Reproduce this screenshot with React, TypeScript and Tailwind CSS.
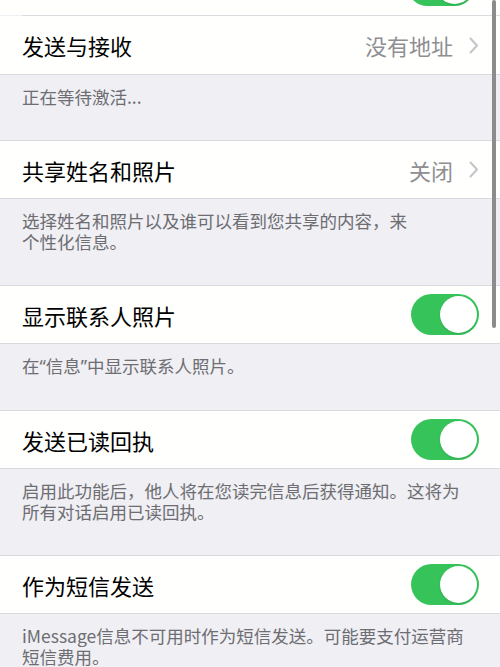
import React from 'react'

const FONT = '"Noto Sans CJK SC", "Noto Sans", sans-serif'

function Toggle() {
  return (
    <div className="relative h-[41px] w-[68px] shrink-0 rounded-full bg-[#36c45a]">
      <div className="absolute right-[2px] top-[2px] h-[37px] w-[37px] rounded-full bg-white shadow-[0_1px_2px_rgba(0,0,0,0.15)]" />
    </div>
  )
}

function Chevron() {
  return (
    <svg width="10" height="17" viewBox="0 0 10 17" className="ml-[16px] shrink-0">
      <path d="M1.5 1.5 L8 8.5 L1.5 15.5" fill="none" stroke="#c4c4c9" strokeWidth="2" strokeLinecap="round" strokeLinejoin="round" />
    </svg>
  )
}

type RowProps = { title: string; value?: string; toggle?: boolean }

function Row({ title, value, toggle }: RowProps) {
  return (
    <div className="flex h-[59px] items-center border-y border-[#d9d9de] bg-[#fffffd] pl-[22px] pr-[21px]">
      <span className="flex-1 text-[22px] leading-none text-black">{title}</span>
      {value && <span className="text-[22px] leading-none text-[#8e8e93]">{value}</span>}
      {value && <Chevron />}
      {toggle && <Toggle />}
    </div>
  )
}

function Footer({ children }: { children: React.ReactNode }) {
  return (
    <div className="whitespace-nowrap pl-[22px] pr-[20px] pt-[11px] pb-[33px] text-[17.5px] leading-[21px] text-[#6d6d72]">
      {children}
    </div>
  )
}

// latin curly quotes are narrower than the CJK ones
const Q = ({ c }: { c: string }) => <span style={{ fontFamily: '"Noto Sans", sans-serif' }}>{c}</span>

export default function App() {
  return (
    <div className="relative h-[667px] w-[500px] overflow-hidden bg-[#efeff4]" style={{ fontFamily: FONT }}>
      <div className="-mt-[44px]">
        {/* previous row, mostly scrolled off */}
        <div className="flex h-[59px] items-center justify-end bg-[#fffffd] pr-[25px]">
          <Toggle />
        </div>
        <div className="ml-[22px] h-px bg-[#dcdce0]" />
        <div className="flex h-[59px] items-center bg-[#fffffd] pl-[22px] pr-[21px] border-b border-[#d9d9de]">
          <span className="flex-1 text-[22px] leading-none text-black">发送与接收</span>
          <span className="text-[22px] leading-none text-[#8e8e93]">没有地址</span>
          <Chevron />
        </div>
        <Footer>正在等待激活...</Footer>

        <Row title="共享姓名和照片" value="关闭" />
        <Footer>
          选择姓名和照片以及谁可以看到您共享的内容，来
          <br />
          个性化信息。
        </Footer>

        <Row title="显示联系人照片" toggle />
        <Footer>
          在<Q c="“" />信息<Q c="”" />中显示联系人照片。
        </Footer>

        <Row title="发送已读回执" toggle />
        <Footer>
          启用此功能后，他人将在您读完信息后获得通知。这将为
          <br />
          所有对话启用已读回执。
        </Footer>

        <Row title="作为短信发送" toggle />
        <Footer>
          iMessage信息不可用时作为短信发送。可能要支付运营商
          <br />
          短信费用。
        </Footer>
      </div>

      {/* scroll indicator */}
      <div className="absolute right-[4px] top-0 h-[328px] w-[4px] rounded-full bg-[#8c8c8c]" />
    </div>
  )
}
